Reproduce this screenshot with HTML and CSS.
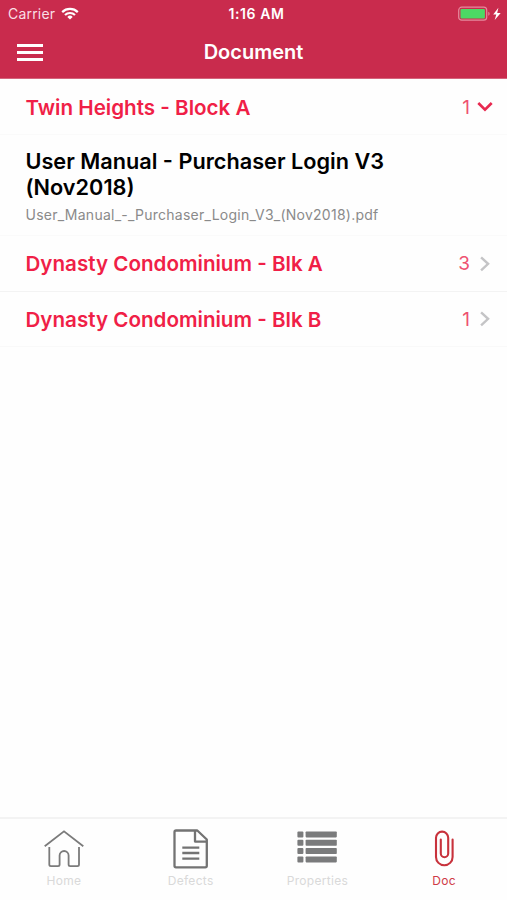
FILE: index.html
```
<!DOCTYPE html>
<html lang="en">
<head>
    <meta charset="UTF-8">
    <meta name="viewport" content="width=device-width, initial-scale=1.0">
    <title>Document</title>
    <link rel="stylesheet" href="styles.css">
</head>
<body>
    <header class="header">
        <div class="status-bar">
            <div class="carrier">
                <span>Carrier</span>
                <svg class="wifi" width="18" height="13" viewBox="0 0 18 13" fill="none" stroke="#fff" stroke-width="2.2">
                    <path d="M1.2 5.1a11.2 11.2 0 0 1 15.6 0M4 8a7.2 7.2 0 0 1 10 0"/>
                    <path d="M9 12.6L6.3 9.9a3.9 3.9 0 0 1 5.4 0z" fill="#fff" stroke="none"/>
                </svg>
            </div>
            <div class="time">1:16 AM</div>
            <svg class="battery" width="44" height="16" viewBox="0 0 44 16">
                <rect x=".7" y="1.2" width="28" height="13" rx="3" fill="none" stroke="#e58a9d" stroke-width="1.2"/>
                <rect x="2.5" y="3" width="24.4" height="9.4" rx="1" fill="#4cd964"/>
                <path d="M30.3 5.8c1.8.6 1.8 3.4 0 4z" fill="#e58a9d"/>
                <path d="M40.4 1.8L35.2 8.6h3.1l-1.6 5.4 6-7.1h-3.5z" fill="#fff"/>
            </svg>
        </div>
        <div class="nav-bar">
            <button class="menu-btn" aria-label="Menu">
                <span></span>
                <span></span>
                <span></span>
            </button>
            <h1>Document</h1>
        </div>
    </header>

    <main class="list">
        <div class="group open">
            <h2>Twin Heights - Block A</h2>
            <span class="count">1</span>
            <svg class="chevron" width="18" height="18" viewBox="0 0 18 18"><path d="M2.3 5L9 11.600l6.700-6.600"/></svg>
        </div>
        <div class="file">
            <h3>User Manual - Purchaser Login V3 (Nov2018)</h3>
            <p>User_Manual_-_Purchaser_Login_V3_(Nov2018).pdf</p>
        </div>
        <div class="group">
            <h2>Dynasty Condominium - Blk A</h2>
            <span class="count">3</span>
            <svg class="chevron" width="18" height="18" viewBox="0 0 18 18"><path d="M5.100 2.300l7 6.500-7 6.500"/></svg>
        </div>
        <div class="group">
            <h2>Dynasty Condominium - Blk B</h2>
            <span class="count">1</span>
            <svg class="chevron" width="18" height="18" viewBox="0 0 18 18"><path d="M5.100 2.300l7 6.500-7 6.500"/></svg>
        </div>
    </main>

    <nav class="tab-bar">
        <a class="tab">
            <svg width="40" height="40" viewBox="0 0 40 40" fill="none" stroke="#7b7b7b" stroke-width="1.8">
                <path d="M.7 17.3L20 2.3l19.3 15"/>
                <path d="M5.3 18v17.6q0 1.600 1.600 1.600H14q1.600 0 1.600-1.600V26.500a4.500 4.500 0 0 1 9 0v9.100q0 1.600 1.600 1.600h7.200q1.600 0 1.600-1.600V18"/>
            </svg>
            <span>Home</span>
        </a>
        <a class="tab">
            <svg width="40" height="40" viewBox="0 0 40 40" fill="none" stroke="#737373" stroke-width="2.3" stroke-linejoin="round">
                <path d="M5 1.500h21.300L35.800 10.500v26.300q0 1.500-1.500 1.500H5Q3.500 38.300 3.500 36.800V3q0-1.500 1.500-1.500z"/>
                <path d="M24 1.500v11.100h11.800"/>
                <path d="M11.300 18.700h17M11.300 24h17M11.300 29.600h17"/>
            </svg>
            <span>Defects</span>
        </a>
        <a class="tab">
            <svg width="40" height="40" viewBox="0 0 40 40" fill="#7a7b7c">
                <rect x=".4" y="2.400" width="6" height="6" rx="1"/><rect x="8.600" y="2.400" width="31.200" height="6" rx=".8"/>
                <rect x=".4" y="10.700" width="6" height="6" rx="1"/><rect x="8.600" y="10.700" width="31.200" height="6" rx=".8"/>
                <rect x=".4" y="19" width="6" height="6" rx="1"/><rect x="8.600" y="19" width="31.200" height="6" rx=".8"/>
                <rect x=".4" y="27.400" width="6" height="6" rx="1"/><rect x="8.600" y="27.400" width="31.200" height="6" rx=".8"/>
            </svg>
            <span>Properties</span>
        </a>
        <a class="tab active">
            <svg width="40" height="40" viewBox="0 0 40 40" fill="none" stroke="#c8323c" stroke-width="2.1" stroke-linecap="round">
                <path d="M28.600 10.500v17.500a8.300 8.300 0 0 1-16.600 0V8.700a6.100 6.100 0 0 1 12.200 0v15.800a3.700 3.700 0 0 1-7.400 0V10.500"/>
            </svg>
            <span>Doc</span>
        </a>
    </nav>
</body>
</html>
```

FILE: styles.css
```
* {
    margin: 0;
    padding: 0;
    box-sizing: border-box;
}

body {
    font-family: Inter, "Liberation Sans", sans-serif;
    background: #fefefe;
    height: 100vh;
    display: flex;
    flex-direction: column;
    overflow: hidden;
}

.header {
    height: 79px;
    background: #c92b4d;
    color: #fff;
    border-bottom: 1px solid #d4647c;
}

.status-bar {
    display: grid;
    grid-template-columns: 1fr auto 1fr;
    align-items: center;
    height: 27px;
    padding: 0 5px 0 8px;
    font-size: 14px;
}

.carrier {
    display: flex;
    align-items: center;
    gap: 6px;
    color: #f9dfe5;
    letter-spacing: 0.2px;
}

.time {
    padding-left: 3px;
    font-weight: 600;
    font-size: 14px;
    letter-spacing: 0.6px;
}

.battery {
    justify-self: end;
}

.nav-bar {
    display: grid;
    grid-template-columns: 1fr auto 1fr;
    align-items: center;
    height: 50px;
    padding: 0 17px;
}

.menu-btn {
    display: flex;
    flex-direction: column;
    gap: 4px;
    width: 26px;
    padding-top: 1px;
    border: none;
    background: none;
    cursor: pointer;
}

.menu-btn span {
    width: 26px;
    height: 3px;
    background: #fff;
}

h1 {
    font-size: 20px;
    font-weight: 600;
}

.list {
    flex: 1;
}

.group {
    display: flex;
    align-items: center;
    height: 56px;
    padding: 0 13px 0 25.5px;
    border-bottom: 1px solid #f3f3f3;
    color: #f01f47;
}

.group.open {
    padding-top: 1px;
    border-bottom-color: #fafafa;
}

.group:last-child {
    height: 55px;
    border-bottom-color: #f9f9f9;
}

.group h2 {
    flex: 1;
    font-size: 20.6px;
    font-weight: 600;
}

.count {
    margin-right: 6px;
    font-size: 19px;
    color: #ee5271;
}

.chevron {
    fill: none;
    stroke: #c4c4c6;
    stroke-width: 2.4;
}

.open .chevron {
    stroke: #e82950;
    stroke-width: 2.7;
}

.file {
    height: 101px;
    padding: 13px 100px 0 25.5px;
    border-bottom: 1px solid #fafafa;
}

.file h3 {
    font-size: 21.7px;
    font-weight: 600;
    line-height: 26px;
    color: #000;
}

.file p {
    margin-top: 6px;
    font-size: 14px;
    line-height: 18px;
    letter-spacing: 0.25px;
    color: #8a8a8a;
    white-space: nowrap;
}

.tab-bar {
    display: flex;
    height: 83px;
    padding-top: 10px;
    border-top: 2px solid #f3f3f3;
}

.tab {
    flex: 1;
    display: flex;
    flex-direction: column;
    align-items: center;
    gap: 4px;
    padding-left: 1px;
    font-size: 12px;
    line-height: 16px;
    letter-spacing: 0.3px;
    color: #d9d9d9;
}

.tab.active {
    color: #cf3a46;
}
```
